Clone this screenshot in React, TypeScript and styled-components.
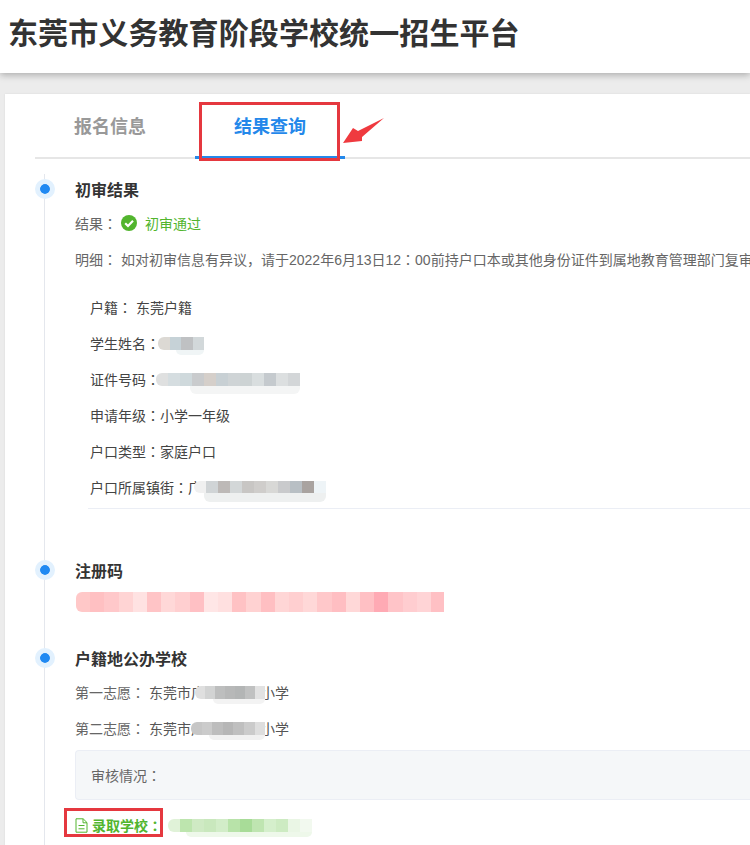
import React from "react";
import styled, { createGlobalStyle } from "styled-components";

const Global = createGlobalStyle`
  html, body { margin: 0; padding: 0; background: #ececec; }
  body { font-family: "Liberation Sans", "Noto Sans CJK SC", sans-serif; }
`;

const Page = styled.div`
  width: 750px;
  height: 845px;
  overflow: hidden;
  background: #ececec;
`;

const Header = styled.header`
  position: relative;
  z-index: 1;
  height: 73px;
  background: #fff;
  box-shadow: 0 2px 7px rgba(0, 0, 0, 0.28);
  display: flex;
  align-items: center;
  padding: 0 0 5px 8px;
  box-sizing: border-box;
`;

const Title = styled.h1`
  margin: 0;
  font-size: 30px;
  line-height: 40px;
  font-weight: 700;
  letter-spacing: 0.1px;
  color: #333;
  white-space: nowrap;
`;

const Card = styled.main`
  margin: 21px 0 0 5px;
  padding: 0 0 0 30px;
  background: #fff;
  height: 760px;
  overflow: hidden;
  box-shadow: 0 0 2px rgba(0, 0, 0, 0.08);
`;

const Tabs = styled.nav`
  display: flex;
  gap: 10px;
  height: 65px;
  box-sizing: border-box;
  border-bottom: 2px solid #e6e6e6;
`;

const Tab = styled.div<{ $active?: boolean }>`
  position: relative;
  width: 150px;
  height: 65px;
  box-sizing: border-box;
  padding-top: 17px;
  text-align: center;
  font-size: 18px;
  line-height: 32px;
  font-weight: 700;
  color: ${(p) => (p.$active ? "#2488ea" : "#999")};
  border-bottom: ${(p) => (p.$active ? "3px solid #2488ea" : "none")};
`;

const TabMark = styled.span`
  position: absolute;
  left: 4px;
  top: 8px;
  width: 141px;
  height: 59px;
  box-sizing: border-box;
  border: 3px solid #e5383f;
`;

const Arrow = styled.svg`
  position: absolute;
  left: 147px;
  top: 23px;
`;

const Section = styled.section<{ $pad: number }>`
  position: relative;
  padding: 0 0 ${(p) => p.$pad}px 40px;
  &::before {
    content: "";
    position: absolute;
    left: 9px;
    top: 0;
    bottom: 0;
    width: 1px;
    background: #e4e7ed;
  }
`;

const Dot = styled.span`
  position: absolute;
  left: 0;
  top: 5px;
  width: 10px;
  height: 10px;
  border: 5px solid #e2f1fe;
  border-radius: 50%;
  background: #2089f2;
  background-clip: padding-box;
  box-shadow: inset 0 0 0 5px #2089f2;
`;

const First = styled.div`
  height: 15px;
`;

const Heading = styled.h3`
  margin: 0;
  height: 31px;
  box-sizing: border-box;
  padding-top: 2px;
  font-size: 16px;
  line-height: 30px;
  font-weight: 700;
  color: #333;
`;

const Row = styled.div`
  height: 36px;
  display: flex;
  align-items: center;
  font-size: 14px;
  color: #666;
  white-space: nowrap;
`;

const Colon = styled.span`
  font-family: "Noto Sans CJK TC", sans-serif;
`;

const Strong = styled.span`
  color: #555;
`;

const School = styled.span`
  color: #555;
  margin-left: -4px;
`;

const Pass = styled.span`
  color: #52b52e;
  font-size: 14px;
  margin-left: 8px;
`;

const Details = styled.div`
  margin: 12px 0 0 13px;
  padding: 0 0 3px 2px;
  border-bottom: 1px solid #ebeef5;
`;

const DetailRow = styled.div`
  height: 36px;
  display: flex;
  align-items: center;
  font-size: 14px;
  color: #444;
  white-space: nowrap;
`;

const Value = styled.span<{ $color?: string }>`
  margin-left: 4px;
  color: ${(p) => p.$color ?? "inherit"};
`;

const CheckIcon = styled.svg`
  margin-left: 4px;
  flex: none;
`;

const Mosaic = styled.span<{
  $w: number;
  $h: number;
  $dx?: number;
  $up?: number;
  $bg: string;
  $under: string;
  $uh?: number;
  $ul?: number;
}>`
  display: inline-block;
  position: relative;
  flex: none;
  width: ${(p) => p.$w}px;
  height: ${(p) => p.$h}px;
  margin-left: ${(p) => p.$dx ?? 0}px;
  margin-top: ${(p) => -(p.$up ?? 0) * 2}px;
  background: ${(p) => p.$bg};
  border-radius: 6px 0 0 6px;
  &::after {
    content: "";
    position: absolute;
    left: ${(p) => p.$ul ?? 18}px;
    right: 0;
    top: 100%;
    height: ${(p) => p.$uh ?? 5}px;
    background: ${(p) => p.$under};
    border-radius: 0 0 6px 6px;
  }
`;

const Review = styled.div`
  margin-top: 4px;
  height: 50px;
  display: flex;
  align-items: center;
  padding-left: 15px;
  background: #f5f7f9;
  border: 1px solid #ebeef5;
  border-right: none;
  border-radius: 4px 0 0 4px;
  box-sizing: border-box;
  font-size: 14px;
  color: #666;
`;

const Admit = styled.div`
  position: relative;
  margin-top: 7px;
  height: 36px;
  display: flex;
  align-items: center;
  font-size: 14px;
  font-weight: 700;
  color: #52b52e;
  white-space: nowrap;
`;

const AdmitMark = styled.span`
  position: absolute;
  left: -11px;
  top: 1px;
  width: 99px;
  height: 29px;
  box-sizing: border-box;
  border: 3px solid #e5383f;
`;

const DocIcon = styled.svg`
  margin-right: 4px;
  flex: none;
`;

const stops = (cols: string[], size: number) =>
  "linear-gradient(90deg," +
  cols.map((c, i) => `${c} ${i * size}px ${(i + 1) * size}px`).join(",") +
  ")";

const C = () => <Colon>：</Colon>;

export default function App() {
  return (
    <Page>
      <Global />
      <Header>
        <Title>东莞市义务教育阶段学校统一招生平台</Title>
      </Header>
      <Card>
        <Tabs>
          <Tab>报名信息</Tab>
          <Tab $active>
            结果查询
            <TabMark />
            <Arrow width="44" height="28" viewBox="0 0 44 28">
              <polygon points="1,26 11,11 16,14 42,1 20,20 20,24" fill="#ef3a3f" />
            </Arrow>
          </Tab>
        </Tabs>

        <First />
        <Section $pad={46}>
          <Dot />
          <Heading>初审结果</Heading>
          <Row>
            结果<C />
            <CheckIcon width="16" height="16" viewBox="0 0 16 16">
              <circle cx="8" cy="8" r="8" fill="#52b52e" />
              <path d="M4.2 8.2 7 11l5-5.2" fill="none" stroke="#fff" strokeWidth="2.2" />
            </CheckIcon>
            <Pass>初审通过</Pass>
          </Row>
          <Row>
            明细<C />
            <Value>
              如对初审信息有异议，请于2022年6月13日12<C />00前持户口本或其他身份证件到属地教育管理部门复审
            </Value>
          </Row>
          <Details>
            <DetailRow>户籍<C /><Value>东莞户籍</Value></DetailRow>
            <DetailRow>
              学生姓名<C />
              <Mosaic $dx={-2} $w={46} $h={13} $bg={stops(["#dcd9d4", "#c6d2d7", "#bfc1c3", "#d2d8da"], 11.5)} $under="#f0f5f6" />
            </DetailRow>
            <DetailRow>
              证件号码<C />
              <Mosaic $dx={-4} $w={144} $h={13} $uh={8} $ul={34} $bg={stops(["#dfe0e0", "#d5dde0", "#cfd9dc", "#c9cbcd", "#d5cfca", "#c8d0d4", "#cfd4d6", "#cdd3d4", "#d9dedf", "#c5cace", "#dcdfe0", "#d3d6d8"], 12)} $under="#f4f5f5" />
            </DetailRow>
            <DetailRow>申请年级<C />小学一年级</DetailRow>
            <DetailRow>户口类型<C />家庭户口</DetailRow>
            <DetailRow>
              户口所属镇街<C />广
              <Mosaic $dx={-8} $w={132} $h={12} $uh={9} $ul={10} $bg={stops(["#f0f0f0", "#d0d4d6", "#bdb9b7", "#d3d7d8", "#c8c6c4", "#cfcdcb", "#d8d8d6", "#c9cacc", "#b8bfc4", "#a9a3a0", "#eef4f7"], 12)} $under="#eef0f0" />
            </DetailRow>
          </Details>
        </Section>

        <Section $pad={21}>
          <Dot />
          <Heading>注册码</Heading>
          <Row>
            <Mosaic $dx={1} $up={2} $w={368} $h={20} $uh={0} $bg={stops(["#ffc8c8", "#ffc0c2", "#ffc8ca", "#ffd4d4", "#ffe2e2", "#ffc4c6", "#ffd8d8", "#ffcfd0", "#ffc0c4", "#ffe6e6", "#ffe0e0", "#ffc2c4", "#ffd2d2", "#ffbfc2", "#ffd6d6", "#ffcfd0", "#ffd8d8", "#ffc8ca", "#ffbec2", "#ffd8d8", "#ffc0c4", "#ffaab4", "#ffc4c8", "#ffcdd0", "#ffd4d6", "#ffc0c4"], 14.2)} $under="transparent" />
          </Row>
        </Section>

        <Section $pad={60}>
          <Dot />
          <Heading>户籍地公办学校</Heading>
          <Row>
            第一志愿<C />
            <Value><Strong>东莞市广</Strong></Value>
            <Mosaic $dx={-10} $w={70} $h={13} $bg={stops(["#dfdfdf", "#d2d3d3", "#bdbebe", "#b7b8b8", "#b3b5b5", "#c0c1c1", "#e2e2e2"], 10)} $under="#f3f3f3" />
            <School>小学</School>
          </Row>
          <Row>
            第二志愿<C />
            <Value><Strong>东莞市广</Strong></Value>
            <Mosaic $dx={-14} $w={74} $h={13} $bg={stops(["#c6c6c6", "#cbcbcb", "#bdbdbd", "#b6b6b6", "#bfbfbf", "#cbcbcb", "#dedede"], 10.6)} $under="#f1f1f1" />
            <School>小学</School>
          </Row>
          <Review>审核情况<C /></Review>
          <Admit>
            <DocIcon width="13" height="15" viewBox="0 0 13 15">
              <path d="M1 .8h7.2L12 4.6v9.6H1zM8 1v3.8h4M3.5 7.5h6M3.5 10.8h6" fill="none" stroke="#52b52e" strokeWidth="1" />
            </DocIcon>
            录取学校<C />
            <Mosaic $dx={6} $w={144} $h={13} $bg={stops(["#e0f2d8", "#bde5ae", "#cfeac4", "#c9e8bd", "#d2edc8", "#b8e3a9", "#a8dc98", "#bfe5b1", "#d5efcc", "#cdebc2", "#eaf6e5", "#f2f9ef"], 12)} $under="#eef8ea" />
            <AdmitMark />
          </Admit>
        </Section>
      </Card>
    </Page>
  );
}
